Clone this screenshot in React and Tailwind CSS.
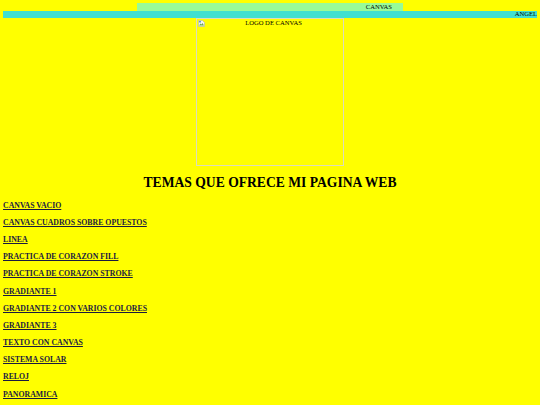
const temas = [
  'CANVAS VACIO',
  'CANVAS CUADROS SOBRE OPUESTOS',
  'LINEA',
  'PRACTICA DE CORAZON FILL',
  'PRACTICA DE CORAZON STROKE',
  'GRADIANTE 1',
  'GRADIANTE 2 CON VARIOS COLORES',
  'GRADIANTE 3',
  'TEXTO CON CANVAS',
  'SISTEMA SOLAR',
  'RELOJ',
  'PANORAMICA',
];

function BrokenImage() {
  return (
    <svg width="7" height="7" viewBox="0 0 14 14" className="shrink-0 mt-[1px]">
      <path d="M1 1h8l4 4v8H1z" fill="#f4f4f4" stroke="#a8a8a8" strokeWidth="1" />
      <path d="M2 11l3-4 2 2 2-3 3 5z" fill="#6aa84f" />
      <rect x="2" y="2" width="4" height="3" fill="#5b9bd5" />
    </svg>
  );
}

export default function App() {
  return (
    <div className="min-h-[405px] bg-[#ffff00] px-[3px] pt-[3px] pb-2 font-['Liberation_Serif',serif] text-black">
      <div className="mx-auto flex h-[8px] w-[266px] items-center justify-end bg-[#98fb98] pr-[11px] text-[6.6px] leading-none">
        CANVAS
      </div>
      <div className="flex h-[7px] items-center justify-end overflow-hidden bg-[#40e0d0] text-[6.6px] leading-none">
        ANGEL
      </div>
      <div className="mx-auto flex h-[148px] w-[148px] items-start border border-[#dcdcbc] px-[1px]">
        <BrokenImage />
        <div className="flex-1 pt-[1px] text-center text-[6.6px] leading-none">LOGO DE CANVAS</div>
      </div>
      <h1 className="mt-[10px] text-center text-[13.6px] font-bold leading-none">
        TEMAS QUE OFRECE MI PAGINA WEB
      </h1>
      <ul className="mt-[11px] flex flex-col gap-[8.2px]">
        {temas.map((t) => (
          <li key={t} className="h-[9px] text-[7.8px] font-bold leading-[9px]">
            <a href="#" className="text-[#1a1a40] underline underline-offset-[1px]">
              {t}
            </a>
          </li>
        ))}
      </ul>
    </div>
  );
}
